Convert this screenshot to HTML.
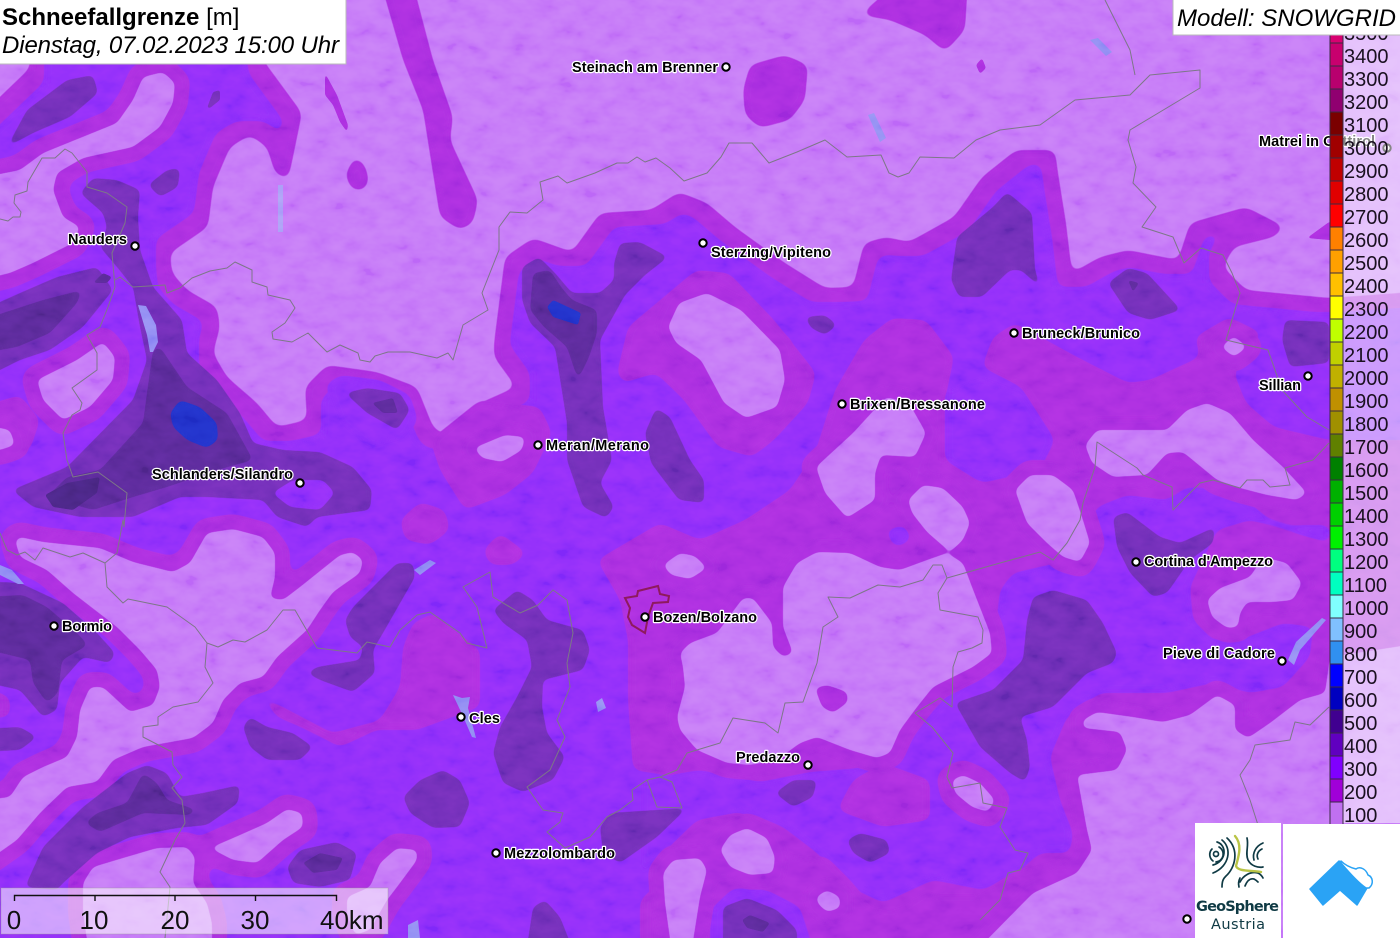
<!DOCTYPE html>
<html lang="de"><head><meta charset="utf-8"><title>Schneefallgrenze</title>
<style>html,body{margin:0;padding:0;background:#c577f8;overflow:hidden}svg{display:block;font-family:"Liberation Sans",sans-serif}</style></head>
<body>
<svg xmlns="http://www.w3.org/2000/svg" width="1400" height="938" viewBox="0 0 1400 938">
<defs>
<filter id="s" filterUnits="userSpaceOnUse" x="-100" y="-100" width="1600" height="1200"><feGaussianBlur stdDeviation="5"/><feComponentTransfer><feFuncA type="linear" slope="12" intercept="-5.5"/></feComponentTransfer></filter>
<filter id="t" filterUnits="userSpaceOnUse" x="-100" y="-100" width="1600" height="1200"><feGaussianBlur stdDeviation="3.2"/><feComponentTransfer><feFuncA type="linear" slope="10" intercept="-4.5"/></feComponentTransfer></filter>
<filter id="f" filterUnits="userSpaceOnUse" x="-100" y="-100" width="1600" height="1200"><feGaussianBlur stdDeviation="1.4"/><feComponentTransfer><feFuncA type="linear" slope="8" intercept="-3.5"/></feComponentTransfer></filter>
<filter id="e" filterUnits="userSpaceOnUse" x="-100" y="-100" width="1600" height="1200"><feMorphology operator="erode" radius="14"/><feGaussianBlur stdDeviation="5"/><feComponentTransfer><feFuncA type="linear" slope="12" intercept="-5.5"/></feComponentTransfer></filter>
<filter id="n" filterUnits="userSpaceOnUse" x="0" y="0" width="1400" height="938"><feTurbulence type="fractalNoise" baseFrequency="0.045 0.075" numOctaves="3" seed="7"/><feColorMatrix type="matrix" values="1.6 0 0 0 -.3 1.6 0 0 0 -.3 1.6 0 0 0 -.3 0 0 0 0 1"/></filter>
<polygon id="main" points="-40,135 30,68 30,40 260,40 263,60 302,113 293,157 288,180 275,173 267,147 250,135 230,147 213,187 208,227 170,253 172,273 187,290 217,307 220,327 213,353 227,377 257,403 277,427 307,420 305,387 327,365 377,372 417,387 433,427 443,435 480,403 516,387 494,357 494,343 505,257 533,238 572,252 600,213 651,210 679,192 707,203 735,227 785,263 825,288 853,287 864,243 886,237 909,242 954,217 982,177 1016,150 1055,150 1058,173 1066,223 1072,273 1100,257 1128,250 1178,260 1190,223 1246,207 1285,227 1274,237 1234,247 1223,267 1246,290 1329,298 1440,290 1440,980 -40,980"/>
<g id="holes">
<polygon points="-40,182 20,170 43,153 80,138 117,123 133,100 143,77 163,72 175,83 173,103 160,127 133,147 83,158 57,173 53,190 63,217 80,227 73,243 33,263 10,273 -40,285"/>
<polygon points="37,380 77,360 103,342 115,357 113,380 90,407 63,420 43,400"/>
<polygon points="-40,420 10,430 15,445 0,450 -40,452"/>
<polygon points="15,540 20,537 43,542 100,548 133,562 173,572 190,563 207,533 233,529 263,537 275,553 275,577 270,598 283,600 300,587 340,555 353,552 363,560 360,573 333,592 320,610 307,630 277,657 263,677 240,683 223,700 213,723 193,738 143,747 113,760 97,782 67,787 40,813 17,840 -40,880 -40,803 10,797 23,777 43,767 67,757 77,737 80,710 90,687 103,687 130,712 153,705 160,687 157,670 140,650 117,627 73,593 47,570 20,557"/>
<polygon points="210,848 240,835 267,823 287,809 302,813 303,827 283,840 257,863 233,860"/>
<polygon points="83,883 93,867 123,858 157,848 187,847 195,857 193,883 207,903 212,923 212,960 90,960 83,913"/>
<polygon points="347,897 370,887 380,863 397,848 417,850 417,860 397,887 387,900 370,930 355,935 347,915"/>
<polygon points="474,448 505,435 525,437 522,450 502,462 482,458"/>
<polygon points="668,327 679,303 707,293 741,310 780,350 785,380 777,407 746,418 724,403 701,360 676,343"/>
<polygon points="816,467 853,433 886,397 909,403 926,433 915,457 881,455 875,473 875,500 847,518 825,493"/>
<polygon points="908,500 923,485 943,488 963,507 970,523 963,540 950,552 927,532 912,513"/>
<polygon points="1015,490 1030,475 1053,475 1073,490 1082,517 1090,543 1080,562 1063,557 1047,543 1027,523"/>
<polygon points="1085,445 1097,430 1167,430 1187,410 1207,403 1230,413 1253,440 1283,467 1307,493 1297,500 1267,495 1240,488 1217,480 1183,452 1167,453 1147,475 1113,477 1092,463"/>
<polygon points="1207,600 1220,588 1250,577 1263,557 1287,563 1302,583 1293,600 1273,602 1247,602 1240,613 1238,627 1227,628 1212,617"/>
<polygon points="663,565 680,553 695,556 707,568 690,579 671,575"/>
<polygon points="680,653 690,643 717,633 743,598 753,598 772,623 773,647 783,657 793,653 783,627 783,587 797,563 817,552 850,553 880,567 900,570 927,560 947,553 963,563 972,587 990,633 992,653 973,667 933,687 917,707 900,730 890,753 877,758 850,750 817,737 800,743 777,760 750,765 727,763 697,750 680,730 677,717 685,687 683,667"/>
<polygon points="720,850 730,835 747,828 767,838 775,857 773,873 750,875 730,867"/>
<polygon points="663,873 673,860 700,858 707,870 700,897 690,960 673,960 665,903"/>
<polygon points="816,897 827,890 840,897 840,908 827,912 818,904"/>
<polygon points="952,780 963,775 980,783 995,800 988,812 972,807 955,793"/>
<polygon points="1083,720 1097,712 1133,717 1163,722 1190,715 1217,695 1235,705 1235,730 1248,738 1270,723 1300,700 1325,693 1330,657 1440,640 1440,980 947,980 967,960 1033,893 1077,873 1092,850 1087,830 1077,775 1117,770 1127,750 1120,732 1083,728"/>
<polygon points="1221,347 1234,336 1247,347 1234,357"/>
</g>
</defs>

<rect width="1400" height="938" fill="#c577f8"/>
<!-- magenta base -->
<g fill="#aa2ee0">
<use href="#main" filter="url(#s)"/>
<g filter="url(#s)">
<polygon points="380,-20 412,-20 433,60 453,117 450,140 478,200 473,223 460,230 440,217 432,167 423,110 403,60"/>
<polygon points="345,175 355,156 365,165 369,180 365,190 352,190"/>
<polygon points="743,90 750,65 785,55 808,65 805,100 790,120 760,128 745,115"/>
<polygon points="860,15 900,-20 968,-20 965,30 945,52 925,35 890,20"/>
</g>
<g filter="url(#f)">
<polygon points="325,73 337,95 348,125 347,132 340,122 333,105 325,95"/>
<polygon points="976,65 982,58 986,68 980,74"/>
<polygon points="1307,238 1329,222 1345,222 1345,240 1329,240"/>
</g></g>
<!-- violet -->
<use href="#main" fill="#8f2dfa" filter="url(#e)"/>
<!-- magenta patches -->
<g fill="#aa2ee0" filter="url(#s)">
<polygon points="617,373 628,327 696,270 729,273 774,320 816,373 808,403 774,440 752,457 718,447 684,400 656,373 623,383"/>
<polygon points="430,440 480,400 540,407 552,433 533,473 505,495 465,510 440,470"/>
<polygon points="400,520 420,502 445,510 450,530 430,545 405,540"/>
<polygon points="483,550 500,533 527,553 513,565 490,565"/>
<polygon points="597,560 660,523 700,540 745,520 790,490 816,450 835,390 864,340 892,318 926,320 954,357 945,400 945,460 982,483 1055,440 1021,387 982,367 993,337 1015,323 1077,357 1128,383 1150,380 1200,357 1195,337 1229,317 1262,333 1234,373 1246,403 1274,427 1329,440 1440,440 1440,980 640,980 640,900 760,790 633,770 628,700 628,640 620,600"/>
<polygon points="257,693 283,707 333,733 380,720 400,687 403,647 413,623 433,613 480,650 480,707 417,730 377,730 340,747 300,727 277,717"/>
<polygon points="-40,677 10,697 10,717 -40,720"/>
<polygon points="-40,413 20,395 40,420 30,450 -40,467"/>
</g>
<!-- violet islands -->
<g fill="#8f2dfa" filter="url(#s)">
<polygon points="1000,590 1013,573 1057,563 1080,540 1097,507 1127,495 1167,500 1187,487 1233,490 1267,517 1293,525 1330,525 1330,543 1293,533 1250,520 1217,530 1190,587 1193,620 1213,640 1240,640 1283,623 1313,627 1310,657 1283,687 1250,693 1213,683 1167,693 1100,693 1067,717 1050,757 1060,800 1073,833 1070,853 1040,853 1017,873 983,890 933,880 883,903 850,887 817,853 783,827 750,813 717,820 683,843 657,857 640,883 640,780 700,770 760,782 810,772 860,768 905,740 950,693 992,660"/>
<polygon points="945,390 982,375 1021,390 1055,440 1040,470 982,483 945,460"/>
<polygon points="325,385 340,375 380,380 410,395 418,420 405,440 370,450 340,425"/>
<polygon points="885,530 905,525 912,540 895,548"/>
</g>
<g fill="#aa2ee0" filter="url(#s)">
<polygon points="837,810 853,780 883,763 930,780 930,820 883,827"/>
<polygon points="650,960 650,880 663,853 697,820 740,812 770,827 790,853 827,857 850,880 873,907 897,908 930,887 933,893 980,893 1017,870 1060,857 1090,843 1100,960"/>
</g>
<g fill="#8f2dfa" filter="url(#s)"><polygon points="710,910 733,888 767,890 800,907 817,960 710,960"/></g>
<!-- rings + light holes -->
<use href="#holes" fill="#aa2ee0" stroke="#aa2ee0" stroke-width="30" stroke-linejoin="round" filter="url(#s)"/>
<use href="#holes" fill="#c577f8" filter="url(#t)"/>
<polygon points="815,688 827,685 847,692 848,702 833,713 822,707" fill="#aa2ee0" filter="url(#t)"/>
<!-- dark 400 -->
<g fill="#6f2fb8" filter="url(#t)">
<polygon points="7,147 27,110 67,80 93,75 98,93 70,117 33,133"/>
<polygon points="148,185 167,170 180,168 178,187 160,197"/>
<polygon points="80,193 93,178 117,180 140,190 138,217 140,250 153,287 182,320 187,353 217,380 240,413 253,443 283,450 320,452 353,467 372,490 370,510 317,517 307,527 277,517 263,500 207,497 180,497 133,517 80,517 33,507 12,490 67,467 133,400 147,360 140,327 133,287 117,267 100,247 107,227 103,213"/>
<polygon points="-40,320 20,293 57,277 97,267 113,290 83,327 50,350 20,360 -40,390"/>
<polygon points="345,393 367,388 400,393 410,410 397,430 367,413"/>
<polygon points="-40,580 20,583 63,603 97,633 115,653 110,663 83,657 60,683 57,710 43,717 20,690 -40,677"/>
<polygon points="-40,730 20,727 37,737 20,750 -40,753"/>
<polygon points="345,620 353,607 397,563 413,563 415,577 383,633 373,650 375,673 353,692 320,680 307,673 317,667 360,660 363,647 350,637"/>
<polygon points="243,727 250,717 267,727 293,733 313,747 300,760 267,760 250,747"/>
<polygon points="403,797 420,780 443,770 460,780 470,803 460,827 433,828 410,813"/>
<polygon points="25,887 43,847 83,807 127,773 147,765 167,773 180,797 203,793 240,785 238,803 207,825 177,828 130,837 97,853 63,883 57,890"/>
<polygon points="287,867 300,850 337,842 357,853 350,880 320,887 293,883"/>
<polygon points="493,610 517,590 533,600 547,620 583,630 590,650 583,670 543,680 542,707 547,733 565,757 553,780 523,792 503,783 493,753 500,727 517,697 532,667 527,640 503,623"/>
<polygon points="600,827 610,813 687,808 657,837 620,863 603,853"/>
<polygon points="775,793 793,780 817,780 813,797 793,807"/>
<polygon points="847,840 860,833 887,840 890,853 870,863 853,853"/>
<polygon points="525,960 533,907 545,900 560,917 577,960"/>
<polygon points="723,960 723,907 747,898 777,910 797,930 797,960"/>
<polygon points="1113,517 1127,512 1160,537 1180,543 1215,527 1213,543 1190,560 1167,593 1153,597 1130,573 1117,547"/>
<polygon points="1027,620 1033,597 1053,590 1087,600 1103,623 1117,653 1113,663 1087,673 1053,707 1020,717 1027,740 1030,767 1025,782 1010,773 980,747 955,703 993,690 1023,660"/>
<polygon points="522,267 539,257 555,273 572,293 600,293 614,280 614,263 620,243 640,242 668,257 645,275 625,295 600,340 603,407 612,460 600,483 614,507 606,518 583,507 567,460 567,423 555,347 530,323 522,300"/>
<polygon points="645,433 656,408 670,417 690,460 704,480 704,503 679,500 651,463"/>
<polygon points="805,317 825,315 837,325 825,335 811,328"/>
<polygon points="951,280 957,237 993,207 1007,192 1032,213 1035,270 1041,288 1021,270 1010,270 982,297 959,297"/>
<polygon points="1108,283 1128,268 1147,273 1181,310 1150,320 1128,313"/>
<polygon points="1282,340 1285,320 1329,322 1329,363 1290,367"/>
</g>
<polygon points="207,108 213,92 220,90 220,100 210,108" fill="#6f2fb8" filter="url(#f)"/>
<!-- violet hole Silandro -->
<polygon points="272,493 293,480 323,480 335,493 320,510 290,507" fill="#8f2dfa" filter="url(#t)"/>
<!-- dark 500 -->
<g fill="#5a2b99" filter="url(#t)">
<polygon points="153,350 160,347 187,387 227,413 253,460 217,470 167,487 133,497 93,510 47,497 67,477 100,470 143,423 147,393"/>
<polygon points="-40,327 43,300 82,290 77,303 50,333 17,347 -40,357"/>
<polygon points="-40,598 23,595 47,607 77,633 88,645 62,660 58,693 47,703 33,683 30,660 -40,643"/>
<polygon points="85,823 97,813 127,803 143,773 157,783 167,800 197,810 190,815 143,813 100,832"/>
<polygon points="530,310 533,273 550,270 561,287 572,300 597,310 597,333 589,357 578,380 567,347 544,327"/>
</g>
<g fill="#5a2b99" filter="url(#f)">
<polygon points="93,283 103,273 112,277 107,283"/>
<polygon points="303,863 320,853 343,858 337,870 313,873"/>
<polygon points="742,920 750,915 770,923 763,932 747,928"/>
<polygon points="372,403 393,398 398,413 383,413"/>
<polygon points="1128,280 1139,283 1133,292"/>
</g>
<polygon points="45,495 67,483 100,477 97,493 73,510 53,507" fill="#4a2583" filter="url(#f)"/>
<!-- blue -->
<polygon points="170,413 180,400 200,407 217,423 218,440 207,448 187,440 173,427" fill="#2230cb" filter="url(#t)"/>
<polygon points="547,307 553,300 581,313 578,325 553,317" fill="#2230cb" filter="url(#f)"/>
<!-- lakes -->
<g fill="#8f8af4" stroke="none">
<polygon points="138,305 146,306 156,325 158,342 153,352 150,352 147,335"/>
<polygon points="278,185 283,185 283,232 278,232" fill="#a99cf7"/>
<polygon points="1090,40 1098,38 1112,52 1106,56"/>
<polygon points="868,115 874,113 886,138 880,142"/>
<polygon points="414,570 430,560 436,563 420,575"/>
<polygon points="453,695 462,698 470,697 468,708 476,738 472,737 462,714"/>
<polygon points="596,702 602,698 606,708 598,712"/>
<polygon points="1288,660 1296,642 1322,618 1326,620 1300,650 1294,665"/>
<polygon points="0,565 12,570 24,584 18,584 0,575"/>
<polygon points="408,925 418,920 420,938 408,938"/>
</g>
<!-- hillshade -->
<rect width="1400" height="938" filter="url(#n)" opacity=".13" style="mix-blend-mode:overlay"/>
<!-- borders -->
<g fill="none" stroke="#7d7788" stroke-width="1" stroke-linejoin="round">
<polyline points="0,219 8,221 13,217 20,217 21,212 14,203 15,195 27,191 28,182 42,158 55,158 65,149 72,153 87,172 87,187 107,193 127,207 125,223 112,253 115,287 108,307 100,327 87,335 97,353 97,370 72,388 82,403 80,410 72,415 63,433 67,460 73,477 98,472 127,493 124,527 123,520 117,553 105,563"/>
<polyline points="115,280 120,277 133,287 165,285 167,293 180,288 192,278 210,271 227,268 235,262 252,270 252,282 267,287 268,295 290,300 295,308 285,323 272,332 273,339 292,342 308,333 327,352 340,345 358,353 360,360 370,362 375,356 388,352 410,352 437,358 448,353 453,360 463,325 488,310 482,293 499,250 499,227 510,212 527,213 543,200 540,182 558,176 567,183 595,173 617,163 628,163 637,157 645,162 656,158 670,168 684,181 707,173 721,157 729,143 752,143 769,163 797,152 825,140 847,157 881,155 889,173 898,177 909,173 920,157 954,158 976,140 1000,130 1040,125 1075,100 1130,95 1150,75 1200,70 1200,88 1130,130 1128,140 1136,167 1133,183 1156,207 1142,227 1173,237 1184,263 1201,248 1223,255 1232,273 1240,293 1226,340 1268,350 1282,390 1307,417 1329,430"/>
<polyline points="1105,0 1130,50 1135,75"/>
<polyline points="1329,443 1313,460 1285,468 1290,485 1270,487 1263,480 1247,480 1240,488 1213,480 1200,483 1173,510 1172,487 1143,475 1137,468 1097,442 1095,467 1083,503 1080,520 1067,543 1053,560 1040,552 1000,563 947,578 938,593 940,610 978,617 983,630 982,643 972,648 958,652 953,667 952,707 940,698 915,713 932,727 953,753 947,777 952,788 980,783 983,803 1007,808 1000,827 1015,850 1028,853 1020,870 1008,873 1000,900 980,920"/>
<polyline points="947,578 942,565 933,565 923,580 900,587 878,585 850,598 828,597 838,617 823,627 817,663 803,702 785,703 778,733 765,723 733,718 720,743 687,753 677,770 660,777 647,780 632,790 633,800 620,810 607,817 590,837 565,848 547,832 560,822 563,813 543,810 527,787 550,770 565,737 557,720 570,687 567,663 573,633 567,600 553,590 538,605 520,613 493,597 490,572 463,587 477,607 487,648 467,643 460,633 430,612 417,615 400,630 390,647 367,642 357,653 317,648 295,610 283,610 267,630 245,642 233,640 218,647 207,643 195,627 167,607 128,599 123,603 107,587 105,563 83,553 70,557 43,548 35,560 25,552 17,555 7,550 0,533"/>
<polyline points="647,780 657,807 682,808 672,782 660,777"/>
<polyline points="207,643 205,667 213,683 198,702 173,707 158,717 158,725 143,727 143,737 172,752 173,765 182,777 172,788 182,800 185,823 175,840 160,872 170,887 165,938"/>
<polyline points="1329,707 1310,725 1295,722 1290,740 1255,745 1250,760 1240,775 1250,800 1258,825"/>
</g>
<polygon points="625,598 637,596 638,591 658,586 660,594 669,596 668,602 653,603 648,617 645,633 632,625 628,617 630,608" fill="none" stroke="#8e1a5e" stroke-width="2"/>

<!-- labels -->
<g font-size="14.5" font-weight="bold" fill="#000" stroke="#fff" stroke-width="2.4" paint-order="stroke" stroke-linejoin="round">
<text x="572" y="72" textLength="146" lengthAdjust="spacing">Steinach am Brenner</text>
<text x="711" y="257" textLength="120" lengthAdjust="spacing">Sterzing/Vipiteno</text>
<text x="68" y="244" textLength="59" lengthAdjust="spacing">Nauders</text>
<text x="1022" y="338" textLength="118" lengthAdjust="spacing">Bruneck/Brunico</text>
<text x="1259" y="390" textLength="42" lengthAdjust="spacing">Sillian</text>
<text x="850" y="409" textLength="135" lengthAdjust="spacing">Brixen/Bressanone</text>
<text x="546" y="450" textLength="103" lengthAdjust="spacing">Meran/Merano</text>
<text x="152" y="479" textLength="141" lengthAdjust="spacing">Schlanders/Silandro</text>
<text x="1144" y="566" textLength="129" lengthAdjust="spacing">Cortina d'Ampezzo</text>
<text x="653" y="622" textLength="104" lengthAdjust="spacing">Bozen/Bolzano</text>
<text x="62" y="631" textLength="50" lengthAdjust="spacing">Bormio</text>
<text x="1163" y="658" textLength="112" lengthAdjust="spacing">Pieve di Cadore</text>
<text x="469" y="723" textLength="31" lengthAdjust="spacing">Cles</text>
<text x="736" y="762" textLength="64" lengthAdjust="spacing">Predazzo</text>
<text x="504" y="858" textLength="111" lengthAdjust="spacing">Mezzolombardo</text>
<text x="1259" y="146" textLength="116" lengthAdjust="spacing">Matrei in Osttirol</text>
</g>
<g fill="#fff" stroke="#000" stroke-width="2">
<circle cx="726" cy="67" r="3.7"/><circle cx="703" cy="243" r="3.7"/><circle cx="135" cy="246" r="3.7"/><circle cx="1014" cy="333" r="3.7"/><circle cx="1308" cy="376" r="3.7"/><circle cx="842" cy="404" r="3.7"/><circle cx="538" cy="445" r="3.7"/><circle cx="300" cy="483" r="3.7"/><circle cx="1136" cy="562" r="3.7"/><circle cx="645" cy="617" r="3.7"/><circle cx="54" cy="626" r="3.7"/><circle cx="1282" cy="661" r="3.7"/><circle cx="461" cy="717" r="3.7"/><circle cx="808" cy="765" r="3.7"/><circle cx="496" cy="853" r="3.7"/><circle cx="1187" cy="919" r="3.7"/><circle cx="1387" cy="148" r="3.7"/>
</g>

<!-- scale -->
<rect x="1" y="888" width="387" height="46" fill="#fff" fill-opacity=".55" stroke="#999" stroke-opacity=".4"/>
<path d="M14.5 901V895.500H336.500V901M95 895.500V901M175 895.500V901M255.500 895.500V901" fill="none" stroke="#111" stroke-width="1.4"/>
<g font-size="26" fill="#111"><text x="14" y="929" text-anchor="middle">0</text><text x="94" y="929" text-anchor="middle">10</text><text x="175" y="929" text-anchor="middle">20</text><text x="255" y="929" text-anchor="middle">30</text><text x="320" y="929">40km</text></g>

<!-- colorbar overlay -->
<rect x="1343" y="35" width="57" height="788" fill="#fff" fill-opacity=".52"/>
<g stroke="#3a2a44" stroke-width="1">
<rect x="1330" y="802" width="13" height="23" fill="#c070f0"/><rect x="1330" y="779" width="13" height="23" fill="#a000d8"/><rect x="1330" y="756" width="13" height="23" fill="#8000ff"/><rect x="1330" y="733" width="13" height="23" fill="#6000c0"/><rect x="1330" y="710" width="13" height="23" fill="#400090"/><rect x="1330" y="687" width="13" height="23" fill="#0000c0"/><rect x="1330" y="664" width="13" height="23" fill="#0000ff"/><rect x="1330" y="641" width="13" height="23" fill="#3090f0"/><rect x="1330" y="618" width="13" height="23" fill="#80c0ff"/><rect x="1330" y="595" width="13" height="23" fill="#80ffff"/><rect x="1330" y="572" width="13" height="23" fill="#00ffc0"/><rect x="1330" y="549" width="13" height="23" fill="#00ff80"/><rect x="1330" y="526" width="13" height="23" fill="#00f000"/><rect x="1330" y="503" width="13" height="23" fill="#00d000"/><rect x="1330" y="480" width="13" height="23" fill="#00b000"/><rect x="1330" y="457" width="13" height="23" fill="#008000"/><rect x="1330" y="434" width="13" height="23" fill="#608000"/><rect x="1330" y="411" width="13" height="23" fill="#a09000"/><rect x="1330" y="388" width="13" height="23" fill="#c09000"/><rect x="1330" y="365" width="13" height="23" fill="#c0b000"/><rect x="1330" y="342" width="13" height="23" fill="#c0d000"/><rect x="1330" y="319" width="13" height="23" fill="#c0ff00"/><rect x="1330" y="296" width="13" height="23" fill="#ffff00"/><rect x="1330" y="273" width="13" height="23" fill="#ffc000"/><rect x="1330" y="250" width="13" height="23" fill="#ffa000"/><rect x="1330" y="227" width="13" height="23" fill="#ff8000"/><rect x="1330" y="204" width="13" height="23" fill="#ff0000"/><rect x="1330" y="181" width="13" height="23" fill="#e00000"/><rect x="1330" y="158" width="13" height="23" fill="#c00000"/><rect x="1330" y="135" width="13" height="23" fill="#a00000"/><rect x="1330" y="112" width="13" height="23" fill="#7a0000"/><rect x="1330" y="89" width="13" height="23" fill="#900070"/><rect x="1330" y="66" width="13" height="23" fill="#b8006e"/><rect x="1330" y="43" width="13" height="23" fill="#c8006e"/><rect x="1330" y="20" width="13" height="23" fill="#d80070"/>
</g>
<g font-size="20" fill="#1a1020">
<text x="1344" y="822">100</text><text x="1344" y="799">200</text><text x="1344" y="776">300</text><text x="1344" y="753">400</text><text x="1344" y="730">500</text><text x="1344" y="707">600</text><text x="1344" y="684">700</text><text x="1344" y="661">800</text><text x="1344" y="638">900</text><text x="1344" y="615">1000</text><text x="1344" y="592">1100</text><text x="1344" y="569">1200</text><text x="1344" y="546">1300</text><text x="1344" y="523">1400</text><text x="1344" y="500">1500</text><text x="1344" y="477">1600</text><text x="1344" y="454">1700</text><text x="1344" y="431">1800</text><text x="1344" y="408">1900</text><text x="1344" y="385">2000</text><text x="1344" y="362">2100</text><text x="1344" y="339">2200</text><text x="1344" y="316">2300</text><text x="1344" y="293">2400</text><text x="1344" y="270">2500</text><text x="1344" y="247">2600</text><text x="1344" y="224">2700</text><text x="1344" y="201">2800</text><text x="1344" y="178">2900</text><text x="1344" y="155">3000</text><text x="1344" y="132">3100</text><text x="1344" y="109">3200</text><text x="1344" y="86">3300</text><text x="1344" y="63">3400</text><text x="1344" y="40">3500</text>
</g>

<!-- title boxes -->
<rect x="-1" y="-1" width="347" height="65" fill="#fff" stroke="#bbb"/>
<text x="2" y="25" font-size="24" fill="#000"><tspan font-weight="bold">Schneefallgrenze</tspan> [m]</text>
<text x="2" y="53" font-size="24" font-style="italic" fill="#000" textLength="337" lengthAdjust="spacing">Dienstag, 07.02.2023 15:00 Uhr</text>
<rect x="1173" y="-1" width="228" height="36" fill="#fff" stroke="#bbb"/>
<text x="1177" y="26" font-size="24" font-style="italic" fill="#000" textLength="219" lengthAdjust="spacing">Modell: SNOWGRID</text>

<!-- GeoSphere logo -->
<rect x="1195" y="823" width="86" height="116" fill="#fff"/>
<g fill="none" stroke="#0f3a44" stroke-width="1.7" stroke-linecap="round">
<circle cx="1216" cy="854" r="2.5"/>
<path d="M1219 847A8 8 0 0 1 1216 862"/>
<path d="M1212 849A8 8 0 0 0 1213 861"/>
<path d="M1217 842C1227 845 1227 861 1213 865"/>
<path d="M1222 840C1232 848 1230 866 1213 873"/>
<path d="M1227 838C1240 850 1235 868 1226 876C1224 878 1222 880 1222 887"/>
<path d="M1247 838C1249 846 1245 853 1248 860C1251 866 1258 868 1263 867"/>
<path d="M1262 849C1258 851 1256 855 1258 859"/>
<path d="M1263 843C1256 846 1252 853 1254 860"/>
<path d="M1240 882C1243 876 1250 871 1258 873C1260 874 1262 876 1263 878"/>
<path d="M1245 886C1247 881 1250 878 1254 879C1256 880 1257 881 1258 882"/>
<path d="M1239 887C1238 883 1239 880 1240 878"/>
</g>
<path d="M1235 836C1243 845 1238 858 1236 866C1238 872 1252 870 1261 872" fill="none" stroke="#b9c445" stroke-width="2.4" stroke-linecap="round"/>
<text x="1196" y="911" font-size="14.5" font-weight="bold" fill="#0f3a44" textLength="83" lengthAdjust="spacing" font-family="DejaVu Sans,sans-serif">GeoSphere</text>
<text x="1211" y="929" font-size="14.500" fill="#0f3a44" textLength="54" lengthAdjust="spacing" font-family="DejaVu Sans,sans-serif">Austria</text>

<!-- snow logo -->
<rect x="1283" y="824" width="117" height="115" fill="#fff"/>
<polygon points="1310,889 1339,861 1343,864 1362,884 1367,888 1357,905 1340,890 1323,905" fill="#2aa3f5" stroke="#2aa3f5" stroke-width="1.5" stroke-linejoin="round"/>
<path d="M1341 861C1346 866 1352 868 1356 869C1360 866 1366 869 1368 875C1373 877 1374 884 1369 888L1366 888C1360 884 1352 876 1341 863Z" fill="#fff" stroke="#2aa3f5" stroke-width="1.5" stroke-linejoin="round"/>
</svg>
</body></html>
